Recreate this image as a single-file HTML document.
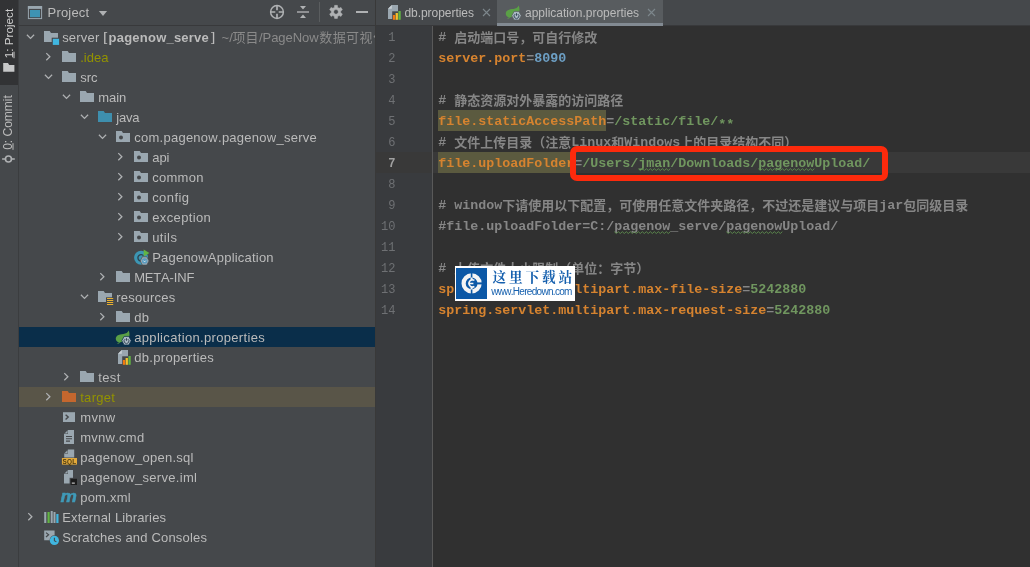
<!DOCTYPE html>
<html><head><meta charset="utf-8"><title>IDE</title>
<style>
html,body{margin:0;padding:0}
body{width:1030px;height:567px;overflow:hidden;position:relative;will-change:transform;background:#45484b;font-family:"Liberation Sans",sans-serif;font-size:13px;color:#bbbbbb;font-kerning:none;-webkit-font-smoothing:antialiased}
div,span,svg{position:absolute}
.c span,span u{position:static}
.t{white-space:pre;line-height:20px;height:20px;top:0}
.row{left:19px;width:356px;height:20px}
.c{font-family:"Liberation Mono",monospace;font-size:13.333px;white-space:pre;line-height:21px;height:21px;font-weight:bold}
.ln{font-family:"Liberation Mono",monospace;font-size:12px;line-height:21px;height:21px;left:376px;width:19.5px;text-align:right;color:#6e7073;white-space:pre}
.k{color:#d6832f}.g{color:#70965f}.n{color:#6d9fc4}.m{color:#868686}
.hl{background:#5b5a3f}
.wv{text-decoration:underline wavy #7f9a6e 1px;text-underline-offset:2px}
</style></head><body>

<div style="left:0;top:0;width:19px;height:567px;background:#45484b"></div>
<div style="left:0;top:0;width:19px;height:85px;background:#323335"></div>
<div style="left:18px;top:0;width:1px;height:567px;background:#3b3d3f"></div>
<div style="left:0;top:0;width:19px;height:84px"><span style="left:-16.8px;top:25.5px;width:50px;height:15px;line-height:15px;font-size:11.7px;transform:rotate(-90deg);white-space:pre;color:#d0d0d0;text-align:center"><u>1</u>: Project</span></div>
<svg style="left:2px;top:62px" width="14" height="11" viewBox="0 0 14 11"><path d="M1.2 9.8V1.1h4.8l1.2 1.8h5.2v6.9z" fill="#c6c7c8"/></svg>
<div style="left:0;top:84px;width:19px;height:90px"><span style="left:-19.6px;top:31px;width:56px;height:15px;line-height:15px;font-size:12px;transform:rotate(-90deg);white-space:pre;color:#bbbbbb;text-align:center"><u>0</u>: Commit</span></div>
<svg style="left:1px;top:152px" width="16" height="14" viewBox="0 0 16 14"><path d="M1.1 7h3.4M10.4 7h3.4" stroke="#afb1b3" stroke-width="1.6" fill="none"/><circle cx="7.45" cy="7" r="3" stroke="#afb1b3" stroke-width="1.6" fill="none"/></svg>
<div style="left:19px;top:0;width:356px;height:25px;background:#45484b"></div>
<div style="left:19px;top:25px;width:357px;height:1px;background:#38393b"></div>
<div style="left:375px;top:0;width:1px;height:567px;background:#393939"></div>
<svg style="left:27px;top:5px" width="16" height="15" viewBox="0 0 16 15"><rect x="1.4" y="1.6" width="13.2" height="12" fill="none" stroke="#9aa7b0" stroke-width="1"/><rect x="0.9" y="1.1" width="14.2" height="2.8" fill="#9aa7b0"/><rect x="3" y="5" width="10" height="7.2" fill="#3e93b3"/></svg>
<span class="t" style="left:47.6px;top:2.5px;letter-spacing:0.177px">Project</span>
<svg style="left:98px;top:10px" width="10" height="7" viewBox="0 0 10 7"><path d="M0.9 0.9h8.2L5 6z" fill="#afb1b3"/></svg>
<svg style="left:269px;top:4px" width="16" height="16" viewBox="0 0 16 16"><circle cx="8" cy="8" r="6.4" fill="none" stroke="#afb1b3" stroke-width="1.5"/><path d="M8 1.6v4.7M8 9.7V14.4M1.6 8h4.7M9.7 8H14.4" stroke="#afb1b3" stroke-width="1.7"/></svg>
<svg style="left:295px;top:4px" width="16" height="16" viewBox="0 0 16 16"><path d="M2 8h12" stroke="#afb1b3" stroke-width="1.4"/><path d="M5 2h6L8 5.6zM5 14h6L8 10.4z" fill="#afb1b3"/></svg>
<div style="left:319px;top:2px;width:1px;height:20px;background:#5a5d5f"></div>
<svg style="left:328px;top:4px" width="16" height="16" viewBox="0 0 16 16"><path d="M6.61 1.35L9.39 1.35L9.63 3.38L11.10 4.23L12.98 3.42L14.37 5.83L12.72 7.05L12.72 8.75L14.37 9.97L12.98 12.38L11.10 11.57L9.63 12.42L9.39 14.45L6.61 14.45L6.37 12.42L4.90 11.57L3.02 12.38L1.63 9.97L3.28 8.75L3.28 7.05L1.63 5.83L3.02 3.42L4.90 4.23L6.37 3.38Z M8 5.6a2.3 2.3 0 1 0 0.001 0z" fill="#afb1b3" fill-rule="evenodd" stroke="#afb1b3" stroke-width="0.5" stroke-linejoin="round"/></svg>
<div style="left:356px;top:11.4px;width:12px;height:1.4px;background:#afb1b3"></div>
<span class="t" style="left:62.2px;top:27.5px;color:#bbbbbb;letter-spacing:0.180px">server</span>
<span class="t" style="left:102.6px;top:26.5px;font-size:13.5px;transform:scaleX(1.15);transform-origin:0 0">[</span>
<span class="t" style="left:108.6px;top:27.5px;font-weight:bold;letter-spacing:0.220px">pagenow_serve</span>
<span class="t" style="left:210.8px;top:26.5px;font-size:13.5px;transform:scaleX(1.15);transform-origin:0 0">]</span>
<span class="t" style="left:221.4px;top:27.5px;color:#8a8a8a;letter-spacing:0.3px">~/</span>
<span class="t" style="left:258.9px;top:27.5px;color:#8a8a8a;letter-spacing:-0.022px">/PageNow</span>
<span class="t" style="left:80.2px;top:47.5px;color:#939300;letter-spacing:0.042px">.idea</span>
<span class="t" style="left:80.2px;top:67.5px;color:#bbbbbb;letter-spacing:0.024px">src</span>
<span class="t" style="left:98.2px;top:87.5px;color:#bbbbbb;letter-spacing:-0.019px">main</span>
<span class="t" style="left:116.2px;top:107.5px;color:#bbbbbb;letter-spacing:-0.187px">java</span>
<span class="t" style="left:134.2px;top:127.5px;color:#bbbbbb;letter-spacing:0.262px">com.pagenow.pagenow_serve</span>
<span class="t" style="left:152.2px;top:147.5px;color:#bbbbbb;letter-spacing:-0.016px">api</span>
<span class="t" style="left:152.2px;top:167.5px;color:#bbbbbb;letter-spacing:0.292px">common</span>
<span class="t" style="left:152.2px;top:187.5px;color:#bbbbbb;letter-spacing:0.418px">config</span>
<span class="t" style="left:152.2px;top:207.5px;color:#bbbbbb;letter-spacing:0.372px">exception</span>
<span class="t" style="left:152.2px;top:227.5px;color:#bbbbbb;letter-spacing:0.396px">utils</span>
<span class="t" style="left:152.2px;top:247.5px;color:#bbbbbb;letter-spacing:0.211px">PagenowApplication</span>
<span class="t" style="left:134.2px;top:267.5px;color:#bbbbbb;letter-spacing:-0.173px">META-INF</span>
<span class="t" style="left:116.2px;top:287.5px;color:#bbbbbb;letter-spacing:0.236px">resources</span>
<span class="t" style="left:134.2px;top:307.5px;color:#bbbbbb;letter-spacing:0.270px">db</span>
<div style="left:19px;top:327px;width:356px;height:20px;background:#0a2e4a"></div>
<span class="t" style="left:134.2px;top:327.5px;color:#bbbbbb;letter-spacing:0.333px">application.properties</span>
<span class="t" style="left:134.2px;top:347.5px;color:#bbbbbb;letter-spacing:0.317px">db.properties</span>
<span class="t" style="left:98.2px;top:367.5px;color:#bbbbbb;letter-spacing:0.412px">test</span>
<div style="left:19px;top:387px;width:356px;height:20px;background:#595548"></div>
<span class="t" style="left:80.2px;top:387.5px;color:#939300;letter-spacing:0.310px">target</span>
<span class="t" style="left:80.2px;top:407.5px;color:#bbbbbb;letter-spacing:0.363px">mvnw</span>
<span class="t" style="left:80.2px;top:427.5px;color:#bbbbbb;letter-spacing:0.260px">mvnw.cmd</span>
<span class="t" style="left:80.2px;top:447.5px;color:#bbbbbb;letter-spacing:0.278px">pagenow_open.sql</span>
<span class="t" style="left:80.2px;top:467.5px;color:#bbbbbb;letter-spacing:0.294px">pagenow_serve.iml</span>
<span class="t" style="left:80.2px;top:487.5px;color:#bbbbbb;letter-spacing:0.212px">pom.xml</span>
<span class="t" style="left:62.2px;top:507.5px;color:#bbbbbb;letter-spacing:0.158px">External Libraries</span>
<span class="t" style="left:62.2px;top:527.5px;color:#bbbbbb;letter-spacing:0.181px">Scratches and Consoles</span>
<svg style="left:0;top:0" width="375" height="567" viewBox="0 0 375 567"><path d="M26.9 34.8L30.5 38.4L34.1 34.8" stroke="#afb1b3" stroke-width="1.25" fill="none"/><g transform="translate(43,29)"><path d="M1 13V2h5.7l1.3 2H15v9z" fill="#9aa7b0"/><rect x="8.7" y="8.7" width="7.6" height="7.6" fill="#45484b"/><rect x="9.8" y="9.8" width="6.3" height="6.1" fill="#40b6e0"/></g><text x="232.6 245.6" y="42" font-family="'Liberation Sans','Noto Sans CJK SC',sans-serif" font-size="13" fill="#8a8a8a">项目</text><text x="319.3 332.7 346.1 359.5 372.9" y="42" font-family="'Liberation Sans','Noto Sans CJK SC',sans-serif" font-size="13" fill="#8a8a8a">数据可视化</text><path d="M46.3 53.1L49.9 56.7L46.3 60.3" stroke="#afb1b3" stroke-width="1.25" fill="none"/><g transform="translate(61,49)"><path d="M1 13V2h5.7l1.3 2H15v9z" fill="#9aa7b0"/></g><path d="M44.9 74.8L48.5 78.4L52.1 74.8" stroke="#afb1b3" stroke-width="1.25" fill="none"/><g transform="translate(61,69)"><path d="M1 13V2h5.7l1.3 2H15v9z" fill="#9aa7b0"/></g><path d="M62.9 94.8L66.5 98.4L70.1 94.8" stroke="#afb1b3" stroke-width="1.25" fill="none"/><g transform="translate(79,89)"><path d="M1 13V2h5.7l1.3 2H15v9z" fill="#9aa7b0"/></g><path d="M80.9 114.8L84.5 118.4L88.1 114.8" stroke="#afb1b3" stroke-width="1.25" fill="none"/><g transform="translate(97,109)"><path d="M1 13V2h5.7l1.3 2H15v9z" fill="#3e8fae"/></g><path d="M98.9 134.8L102.5 138.4L106.1 134.8" stroke="#afb1b3" stroke-width="1.25" fill="none"/><g transform="translate(115,129)"><path d="M1 13V2h5.7l1.3 2H15v9z" fill="#9aa7b0"/><circle cx="6" cy="8.4" r="2" fill="#45484b"/></g><path d="M118.3 153.1L121.9 156.7L118.3 160.3" stroke="#afb1b3" stroke-width="1.25" fill="none"/><g transform="translate(133,149)"><path d="M1 13V2h5.7l1.3 2H15v9z" fill="#9aa7b0"/><circle cx="6" cy="8.4" r="2" fill="#45484b"/></g><path d="M118.3 173.1L121.9 176.7L118.3 180.3" stroke="#afb1b3" stroke-width="1.25" fill="none"/><g transform="translate(133,169)"><path d="M1 13V2h5.7l1.3 2H15v9z" fill="#9aa7b0"/><circle cx="6" cy="8.4" r="2" fill="#45484b"/></g><path d="M118.3 193.1L121.9 196.7L118.3 200.3" stroke="#afb1b3" stroke-width="1.25" fill="none"/><g transform="translate(133,189)"><path d="M1 13V2h5.7l1.3 2H15v9z" fill="#9aa7b0"/><circle cx="6" cy="8.4" r="2" fill="#45484b"/></g><path d="M118.3 213.1L121.9 216.7L118.3 220.3" stroke="#afb1b3" stroke-width="1.25" fill="none"/><g transform="translate(133,209)"><path d="M1 13V2h5.7l1.3 2H15v9z" fill="#9aa7b0"/><circle cx="6" cy="8.4" r="2" fill="#45484b"/></g><path d="M118.3 233.1L121.9 236.7L118.3 240.3" stroke="#afb1b3" stroke-width="1.25" fill="none"/><g transform="translate(133,229)"><path d="M1 13V2h5.7l1.3 2H15v9z" fill="#9aa7b0"/><circle cx="6" cy="8.4" r="2" fill="#45484b"/></g><g transform="translate(133,249)"><circle cx="8.1" cy="8.8" r="7" fill="#3c96b4"/><path d="M10.6 6.8A3.2 3.2 0 1 0 10.6 10.8" stroke="#2f4450" stroke-width="1.4" fill="none"/><path d="M10.7 0.4v7.2L16.4 3.9z" fill="#62b543"/><path d="M16.00 11.90L13.80 7.71L9.40 7.71L7.20 11.90L9.40 16.09L13.80 16.09Z" fill="#9aa7b0" stroke="#45484b" stroke-width="0.6"/><circle cx="11.6" cy="11.9" r="2.7" fill="#5a9cc0"/><path d="M10.4 11.6l1.2 1.3 1.2-1.3" stroke="#dfe6ea" stroke-width="0.9" fill="none"/></g><path d="M100.3 273.1L103.9 276.7L100.3 280.3" stroke="#afb1b3" stroke-width="1.25" fill="none"/><g transform="translate(115,269)"><path d="M1 13V2h5.7l1.3 2H15v9z" fill="#9aa7b0"/></g><path d="M80.9 294.8L84.5 298.4L88.1 294.8" stroke="#afb1b3" stroke-width="1.25" fill="none"/><g transform="translate(97,289)"><path d="M1 13V2h5.7l1.3 2H15v9z" fill="#9aa7b0"/><rect x="9" y="8.3" width="7.4" height="7.8" fill="#45484b"/><path d="M10 9.5h6.2M10 11.5h6.2M10 13.5h6.2M10 15.5h6.2" stroke="#e9b130" stroke-width="1.15"/></g><path d="M100.3 313.1L103.9 316.7L100.3 320.3" stroke="#afb1b3" stroke-width="1.25" fill="none"/><g transform="translate(115,309)"><path d="M1 13V2h5.7l1.3 2H15v9z" fill="#9aa7b0"/></g><g transform="translate(115,329)"><path d="M1 11C-0.2 7 3.6 5.2 8.4 5C11 4.8 12.6 3.8 13.6 1.6C15.2 5 14.6 8.4 12.6 10L6.5 13C4.4 13.8 2 13.4 1 11Z" fill="#5aa046"/><path d="M2.6 14.4C4 14.2 5 13.4 5.8 12.2" stroke="#5aa046" stroke-width="1" fill="none"/><path d="M16.20 11.70L13.85 7.43L9.15 7.43L6.80 11.70L9.15 15.97L13.85 15.97Z" fill="#aab8c3" stroke="#0a2e4a" stroke-width="0.7"/><path d="M10.2 10.1a2.4 2.4 0 1 0 2.6 0" stroke="#36485a" stroke-width="1" fill="none"/><path d="M11.5 9.2v2.6" stroke="#36485a" stroke-width="1"/></g><g transform="translate(115,349)"><path d="M3 1h10v14H3V4.8L6.8 1z" fill="#9aa7b0"/><path d="M3 4.8h3.8V1z" fill="#c9d0d5"/><rect x="7.2" y="7.3" width="8.8" height="8.7" fill="#45484b"/><rect x="7.9" y="11" width="2.2" height="4.8" fill="#f2790f"/><rect x="10.6" y="9" width="2.3" height="6.8" fill="#f4c12e"/><rect x="13.4" y="7" width="2.3" height="8.8" fill="#62b543"/></g><path d="M64.3 373.1L67.9 376.7L64.3 380.3" stroke="#afb1b3" stroke-width="1.25" fill="none"/><g transform="translate(79,369)"><path d="M1 13V2h5.7l1.3 2H15v9z" fill="#9aa7b0"/></g><path d="M46.3 393.1L49.9 396.7L46.3 400.3" stroke="#afb1b3" stroke-width="1.25" fill="none"/><g transform="translate(61,389)"><path d="M1 13V2h5.7l1.3 2H15v9z" fill="#c4672e"/></g><g transform="translate(61,409)"><rect x="2" y="3.2" width="12" height="9.8" fill="#9aa7b0"/><path d="M4.6 5.8l2.6 2.3-2.6 2.3" stroke="#45484b" stroke-width="1.4" fill="none"/></g><g transform="translate(61,429)"><path d="M3 1h10v14H3V5l4-4z" fill="#9aa7b0"/><path d="M3 5h4V1z" fill="#45484b"/><path d="M3.6 4.6L6.6 1.6V4.6z" fill="#9aa7b0"/><path d="M5 7.5h6M5 9.8h6M5 12.1h4" stroke="#45484b" stroke-width="1.1"/></g><g transform="translate(61,449)"><path d="M3.2 0.6h10v8H3.2V4.4l3.8-3.8z" fill="#9aa7b0"/><path d="M3.2 4.4h3.8V0.6z" fill="#45484b"/><path d="M3.8 4L6.6 1.2V4z" fill="#9aa7b0"/><rect x="0.9" y="9" width="15.1" height="6.6" fill="#e3a93b"/><text x="8.4" y="14.6" font-family="Liberation Sans" font-weight="bold" font-size="6.4" text-anchor="middle" fill="#4a3a12" letter-spacing="0.2">SQL</text></g><g transform="translate(61,469)"><path d="M3 1h9v13.6H3V5l4-4z" fill="#9aa7b0"/><path d="M3 5h4V1z" fill="#45484b"/><path d="M3.6 4.6L6.6 1.6V4.6z" fill="#9aa7b0"/><rect x="8.6" y="8.8" width="7.4" height="7.2" fill="#45484b"/><rect x="9.6" y="9.8" width="6.4" height="6.2" fill="#1c1c1c"/><rect x="10.8" y="13.6" width="3" height="1" fill="#e6e6e6"/></g><g transform="translate(61,489)"><text x="-0.6" y="13.2" font-family="Liberation Sans" font-style="italic" font-weight="bold" font-size="17" fill="#3f9ab8" stroke="#3f9ab8" stroke-width="0.5" textLength="16.4" lengthAdjust="spacingAndGlyphs">m</text></g><path d="M28.3 513.1L31.9 516.7L28.3 520.3" stroke="#afb1b3" stroke-width="1.25" fill="none"/><g transform="translate(43,509)"><rect x="1.2" y="3" width="2.1" height="11" fill="#9aa7b0"/><rect x="4.5" y="3" width="2.2" height="11" fill="#62b543"/><rect x="7.7" y="2" width="2" height="12" fill="#9aa7b0"/><rect x="10.5" y="3" width="2" height="11" fill="#9aa7b0"/><rect x="13.3" y="5" width="2.2" height="9" fill="#40b6e0"/></g><g transform="translate(43,529)"><path d="M1.2 1.6h10.4v4.6a5 5 0 0 0-5 5H1.2z" fill="#9aa7b0"/><path d="M3 3.6l2.6 2.2L3 8" stroke="#45484b" stroke-width="1.2" fill="none"/><circle cx="11.4" cy="11.4" r="4.6" fill="#40b6e0"/><path d="M11.4 8.8v2.9l2 1.2" stroke="#45484b" stroke-width="1.1" fill="none"/></g></svg>
<div style="left:376px;top:0;width:654px;height:25px;background:#45484b"></div>
<div style="left:376px;top:25px;width:654px;height:1px;background:#38393b"></div>
<div style="left:376px;top:26px;width:57px;height:541px;background:#393b3e"></div>
<div style="left:432px;top:26px;width:1px;height:541px;background:#595959"></div>
<div style="left:433px;top:26px;width:597px;height:541px;background:#303030"></div>
<div style="left:497px;top:0;width:166px;height:25px;background:#585c5f"></div>
<div style="left:497px;top:23px;width:166px;height:3px;background:#828a92"></div>
<svg style="left:385px;top:4px" width="16" height="16" viewBox="0 0 16 16"><path d="M3 1h10v14H3V4.8L6.8 1z" fill="#9aa7b0"/><path d="M3 4.8h3.8V1z" fill="#c9d0d5"/><rect x="7.2" y="7.3" width="8.8" height="8.7" fill="#45484b"/><rect x="7.9" y="11" width="2.2" height="4.8" fill="#f2790f"/><rect x="10.6" y="9" width="2.3" height="6.8" fill="#f4c12e"/><rect x="13.4" y="7" width="2.3" height="8.8" fill="#62b543"/></svg>
<span class="t" style="left:404.4px;top:2.5px;font-size:12px;letter-spacing:-0.042px">db.properties</span>
<svg style="left:482px;top:8px" width="9" height="9" viewBox="0 0 9 9"><path d="M1 1l7 7M8 1l-7 7" stroke="#7d878c" stroke-width="1.1"/></svg>
<svg style="left:505px;top:4px" width="16" height="16" viewBox="0 0 16 16"><path d="M1 11C-0.2 7 3.6 5.2 8.4 5C11 4.8 12.6 3.8 13.6 1.6C15.2 5 14.6 8.4 12.6 10L6.5 13C4.4 13.8 2 13.4 1 11Z" fill="#5aa046"/><path d="M2.6 14.4C4 14.2 5 13.4 5.8 12.2" stroke="#5aa046" stroke-width="1" fill="none"/><path d="M16.20 11.70L13.85 7.43L9.15 7.43L6.80 11.70L9.15 15.97L13.85 15.97Z" fill="#aab8c3" stroke="#585c5f" stroke-width="0.7"/><path d="M10.2 10.1a2.4 2.4 0 1 0 2.6 0" stroke="#36485a" stroke-width="1" fill="none"/><path d="M11.5 9.2v2.6" stroke="#36485a" stroke-width="1"/></svg>
<span class="t" style="left:525px;top:2.5px;font-size:12px;letter-spacing:0.001px">application.properties</span>
<svg style="left:646.5px;top:8px" width="9" height="9" viewBox="0 0 9 9"><path d="M1 1l7 7M8 1l-7 7" stroke="#7d878c" stroke-width="1.1"/></svg>
<div style="left:376px;top:152px;width:654px;height:21px;background:#393939"></div>
<div style="left:432px;top:152px;width:1px;height:21px;background:#595959"></div>
<span class="ln" style="top:28px">1</span>
<span class="ln" style="top:49px">2</span>
<span class="ln" style="top:70px">3</span>
<span class="ln" style="top:91px">4</span>
<span class="ln" style="top:112px">5</span>
<span class="ln" style="top:133px">6</span>
<span class="ln" style="top:154px;color:#a0a0a0;font-weight:bold">7</span>
<span class="ln" style="top:175px">8</span>
<span class="ln" style="top:196px">9</span>
<span class="ln" style="top:217px">10</span>
<span class="ln" style="top:238px">11</span>
<span class="ln" style="top:259px">12</span>
<span class="ln" style="top:280px">13</span>
<span class="ln" style="top:301px">14</span>
<span class="c m" style="left:438.3px;top:27px"># </span>
<span class="c" style="left:438.3px;top:48px"><span class="k">server.port</span><span class="m">=</span><span class="n">8090</span></span>
<span class="c m" style="left:438.3px;top:90px"># </span>
<div class="hl" style="left:438px;top:110px;width:168px;height:21px"></div>
<span class="c" style="left:438.3px;top:111px"><span class="k">file.staticAccessPath</span><span class="m">=</span><span class="g">/static/file/<span style="vertical-align:-3px">**</span></span></span>
<span class="c m" style="left:438.3px;top:132px"># </span>
<span class="c m" style="left:571.3px;top:132px">Linux</span>
<span class="c m" style="left:624.3px;top:132px">Windows</span>
<div class="hl" style="left:438px;top:152px;width:136px;height:21px"></div>
<span class="c" style="left:438.3px;top:153px"><span class="k">file.uploadFolder</span><span class="m">=</span><span class="g">/Users/jman/Downloads/pagenowUpload/</span></span>
<span class="c m" style="left:438.3px;top:195px"># window</span>
<span class="c m" style="left:879.3px;top:195px">jar</span>
<span class="c" style="left:438.3px;top:216px"><span class="m">#file.uploadFolder=C:/pagenow_serve/pagenowUpload/</span></span>
<span class="c m" style="left:438.3px;top:258px"># </span>
<span class="c" style="left:438.3px;top:279px"><span class="k">spring.servlet.multipart.max-file-size</span><span class="m">=</span><span class="g">5242880</span></span>
<span class="c" style="left:438.3px;top:300px"><span class="k">spring.servlet.multipart.max-request-size</span><span class="m">=</span><span class="g">5242880</span></span>
<svg style="left:0;top:0" width="1030" height="567" viewBox="0 0 1030 567"><g font-family="'Liberation Mono','Noto Sans CJK SC',monospace" font-size="13" font-weight="bold" fill="#868686"><text x="454.3" y="41.6" textLength="143" lengthAdjust="spacing">启动端口号，可自行修改</text><text x="454.3" y="104.6" textLength="169" lengthAdjust="spacing">静态资源对外暴露的访问路径</text><text x="454.3" y="146.6" textLength="117" lengthAdjust="spacing">文件上传目录（注意</text><text x="611.3" y="146.6">和</text><text x="680.3" y="146.6" textLength="117" lengthAdjust="spacing">上的目录结构不同）</text><text x="502.3" y="209.6" textLength="377" lengthAdjust="spacing">下请使用以下配置，可使用任意文件夹路径，不过还是建议与项目</text><text x="903.3" y="209.6" textLength="65" lengthAdjust="spacing">包同级目录</text><text x="454.3" y="272.6" textLength="195" lengthAdjust="spacing">上传文件大小限制（单位：字节）</text></g><path d="M638.3 168.7L640.3 170.5L642.3 168.7L644.3 170.5L646.3 168.7L648.3 170.5L650.3 168.7L652.3 170.5L654.3 168.7L656.3 170.5L658.3 168.7L660.3 170.5L662.3 168.7L664.3 170.5L666.3 168.7L668.3 170.5L670.3 168.7" stroke="#5f8f4f" stroke-width="0.9" fill="none"/><path d="M758.3 168.7L760.3 170.5L762.3 168.7L764.3 170.5L766.3 168.7L768.3 170.5L770.3 168.7L772.3 170.5L774.3 168.7L776.3 170.5L778.3 168.7L780.3 170.5L782.3 168.7L784.3 170.5L786.3 168.7L788.3 170.5L790.3 168.7L792.3 170.5L794.3 168.7L796.3 170.5L798.3 168.7L800.3 170.5L802.3 168.7L804.3 170.5L806.3 168.7L808.3 170.5L810.3 168.7L812.3 170.5L814.3 168.7" stroke="#5f8f4f" stroke-width="0.9" fill="none"/><path d="M614.3 231.7L616.3 233.5L618.3 231.7L620.3 233.5L622.3 231.7L624.3 233.5L626.3 231.7L628.3 233.5L630.3 231.7L632.3 233.5L634.3 231.7L636.3 233.5L638.3 231.7L640.3 233.5L642.3 231.7L644.3 233.5L646.3 231.7L648.3 233.5L650.3 231.7L652.3 233.5L654.3 231.7L656.3 233.5L658.3 231.7L660.3 233.5L662.3 231.7L664.3 233.5L666.3 231.7L668.3 233.5L670.3 231.7" stroke="#5f8f4f" stroke-width="0.9" fill="none"/><path d="M726.3 231.7L728.3 233.5L730.3 231.7L732.3 233.5L734.3 231.7L736.3 233.5L738.3 231.7L740.3 233.5L742.3 231.7L744.3 233.5L746.3 231.7L748.3 233.5L750.3 231.7L752.3 233.5L754.3 231.7L756.3 233.5L758.3 231.7L760.3 233.5L762.3 231.7L764.3 233.5L766.3 231.7L768.3 233.5L770.3 231.7L772.3 233.5L774.3 231.7L776.3 233.5L778.3 231.7L780.3 233.5L782.3 231.7" stroke="#5f8f4f" stroke-width="0.9" fill="none"/></svg>
<div style="left:569.6px;top:145.6px;width:306.3px;height:23.6px;border:6px solid #fd2a0c;border-radius:7px"></div>
<div style="left:455px;top:266px;width:120px;height:35px;background:#ffffff"></div>
<div style="left:456.3px;top:268px;width:30.6px;height:31px;background:#0c58a6"></div>
<svg style="left:456px;top:268px" width="31" height="31" viewBox="0 0 31 31"><circle cx="15.6" cy="15.4" r="8" fill="none" stroke="#f4f4f4" stroke-width="4.2"/><path d="M15.6 4v6M15.6 21v6" stroke="#0c58a6" stroke-width="1.6"/><path d="M15.6 9.5v3M15.6 18.5v3" stroke="#f4f4f4" stroke-width="2"/><path d="M18.4 12.3a3.6 3.6 0 1 0 0 6.2M12.4 15.4h5" stroke="#f4f4f4" stroke-width="1.5" fill="none"/><rect x="20" y="14.4" width="6" height="2" fill="#0c58a6"/></svg>
<span style="left:491.2px;top:285.5px;font-size:10px;line-height:12px;color:#1660ae;white-space:pre;letter-spacing:-0.700px">www.Heredown.com</span>
<svg style="left:0;top:0" width="1030" height="567" viewBox="0 0 1030 567"><text x="492.6 509.1 525.6 542.1 558.6" y="282.4" font-family="'Liberation Serif','Noto Serif CJK SC',serif" font-size="13.6" font-weight="bold" fill="#1660ae">这里下载站</text></svg>
</body></html>
